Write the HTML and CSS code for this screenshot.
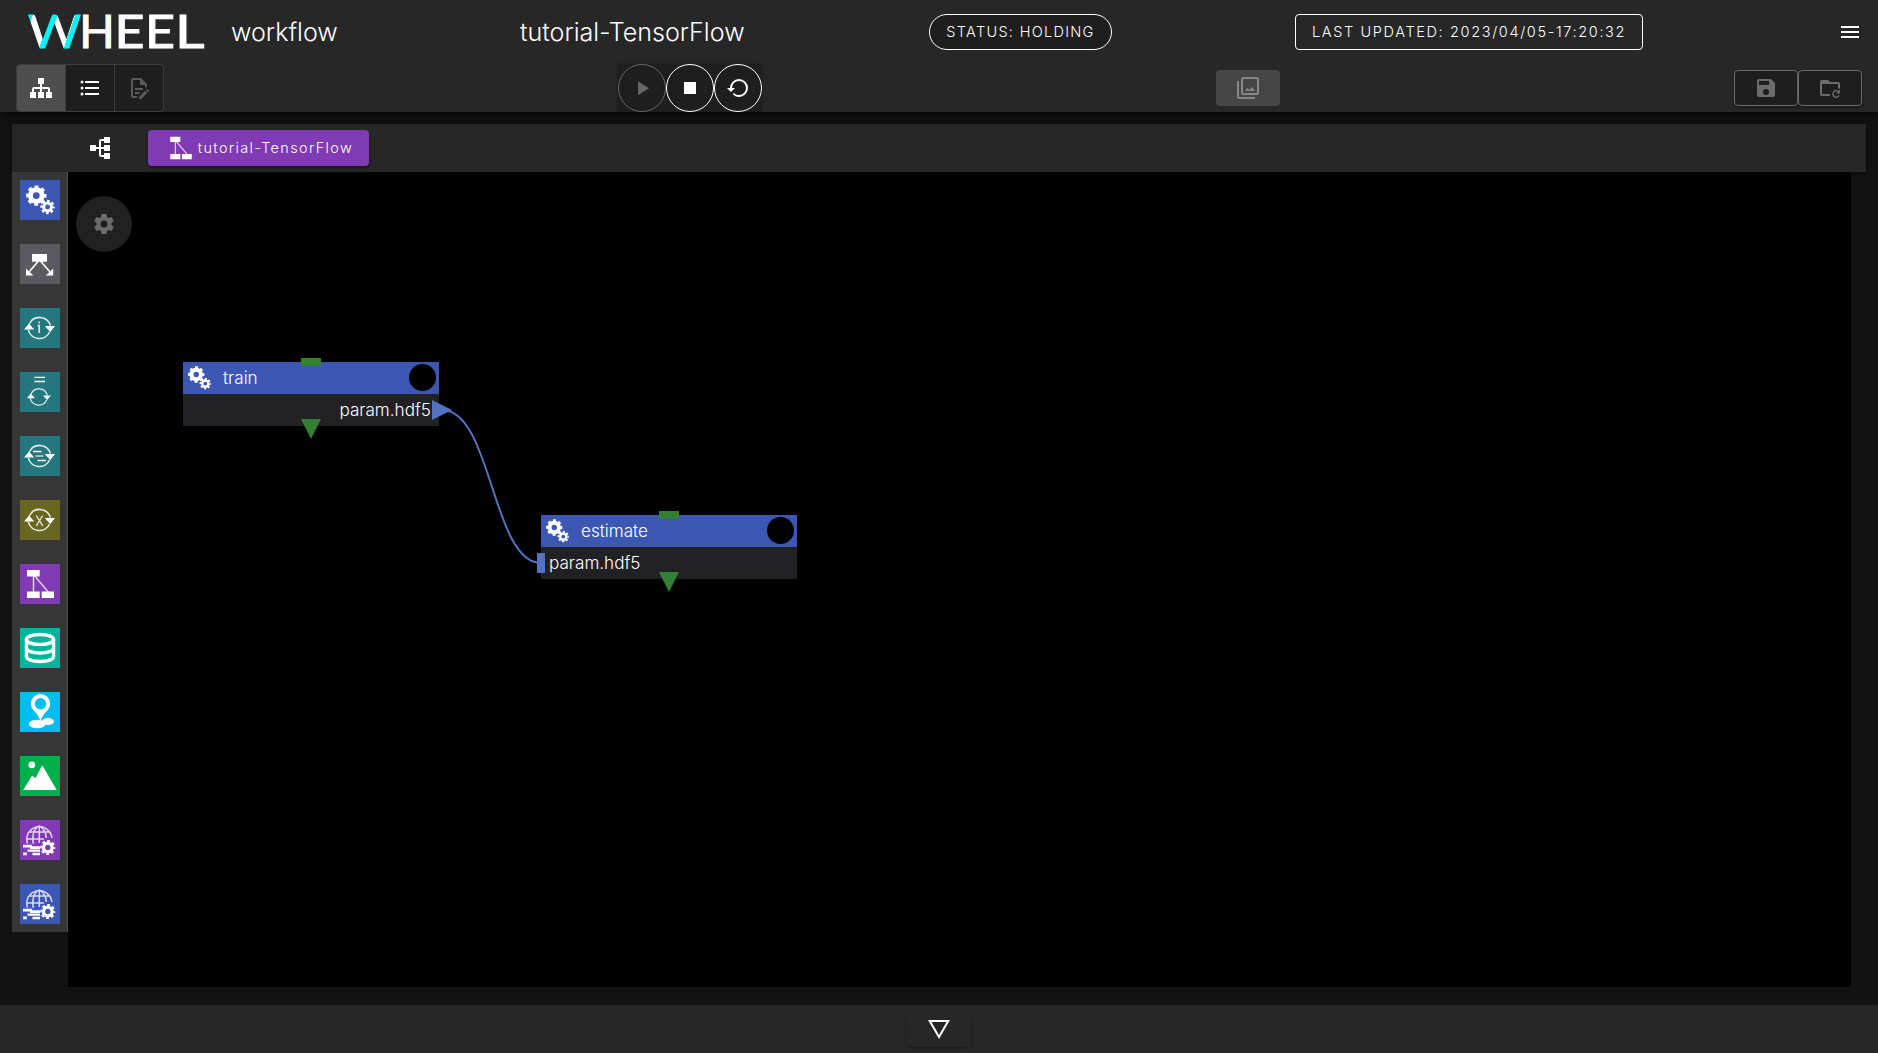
FILE: index.html
```html
<!DOCTYPE html>
<html lang="en">
<head>
<meta charset="utf-8">
<title>WHEEL workflow</title>
<link rel="stylesheet" href="styles.css">
</head>
<body>
<svg class="defs" aria-hidden="true">
  <symbol id="gears" viewBox="0 0 40 40">
    <g fill="none" stroke="#fff">
      <circle cx="16.3" cy="15.6" r="5.9" stroke-width="5"/>
      <circle cx="16.3" cy="15.6" r="8.7" stroke-width="3" stroke-dasharray="3.8 3.033" stroke-dashoffset="1.9"/>
      <circle cx="27.6" cy="27" r="3.9" stroke-width="3"/>
      <circle cx="27.6" cy="27" r="6" stroke-width="2.4" stroke-dasharray="2.6 2.112" stroke-dashoffset="1.3"/>
    </g>
  </symbol>
  <symbol id="cycle" viewBox="0 0 40 40">
    <path d="M9.3 16A11.3 11.3 0 0 1 30.4 17.5M29.6 24A11.3 11.3 0 0 1 8.3 21.6" fill="none" stroke="#fff" stroke-opacity=".85" stroke-width="1.6"/>
    <path d="M4 21.6L9 15.4L14.2 21.6ZM24.8 18L35 18L30.2 24Z" fill="#fff"/>
  </symbol>
  <symbol id="workflow" viewBox="0 0 40 40">
    <path d="M13.5 9V30M14 11L29 29" stroke="#fff" stroke-opacity=".75" stroke-width="1.5"/>
    <path d="M7 6H19.7V12.5H7ZM7 27.5H19.7V34H7ZM21.7 27.5H34V34H21.7Z" fill="#fff"/>
  </symbol>
  <symbol id="globe" viewBox="0 0 40 40">
    <g fill="none" stroke="#fff" stroke-opacity=".78" stroke-width="1.5">
      <path d="M7.5 23.5A12.6 12.6 0 1 1 31.900 18M19.3 6V23M13.600 24C12 20 12.300 8.500 19.300 6C24.500 8.500 26 13 26.200 18M8.500 12H30M6.800 19H24"/>
    </g>
    <path d="M3 24.700H12V26.300H20V29H10V27.600H3ZM7.500 29.400H20V31.700H7.500ZM3.200 32.500H6.800V35.300H3.200ZM12.500 32.700H20V35.300H12.500Z" fill="#fff"/>
    <g fill="none" stroke="#fff">
      <circle cx="27.800" cy="27.500" r="4.300" stroke-width="3.200"/>
      <circle cx="27.800" cy="27.500" r="6.500" stroke-width="2.200" stroke-dasharray="2.700 2.405" stroke-dashoffset="1.350"/>
    </g>
  </symbol>
</svg>

<header class="app-bar">
  <div class="title-row">
    <svg class="logo" viewBox="0 0 180 44" role="img" aria-label="WHEEL">
      <defs>
        <linearGradient id="stripes" gradientUnits="userSpaceOnUse" x1="11" y1="38" x2="33.300" y2="45.600" spreadMethod="repeat">
          <stop offset="0" stop-color="#00f6ff"/><stop offset=".3" stop-color="#00f6ff"/>
          <stop offset=".3" stop-color="#fff"/><stop offset="1" stop-color="#fff"/>
        </linearGradient>
      </defs>
      <g class="logo-text">
        <text x="0" y="37.500" fill="url(#stripes)" stroke="url(#stripes)" textLength="53" lengthAdjust="spacingAndGlyphs">W</text>
        <g fill="#fff" stroke="#fff">
          <text x="51.300" y="37.500">H</text>
          <text x="86.500" y="37.500" textLength="30" lengthAdjust="spacingAndGlyphs">E</text>
          <text x="117" y="37.500" textLength="30" lengthAdjust="spacingAndGlyphs">E</text>
          <text x="147" y="37.500" textLength="29.500" lengthAdjust="spacingAndGlyphs">L</text>
        </g>
      </g>
    </svg>
    <span class="heading mode-name">workflow</span>
    <span class="heading project-name">tutorial-TensorFlow</span>
    <span class="status">STATUS: HOLDING</span>
    <span class="updated">LAST UPDATED: 2023/04/05-17:20:32</span>
    <svg class="icon menu" viewBox="0 0 24 24"><path d="M3 6H21V8H3ZM3 11H21V13H3ZM3 16H21V18H3Z"/></svg>
  </div>
  <div class="tool-row">
    <div class="view-toggle">
      <button class="active"><svg class="icon" viewBox="0 0 24 24"><path d="M9,2V8H11V11H5C3.89,11 3,11.89 3,13V16H1V22H7V16H5V13H11V16H9V22H15V16H13V13H19V16H17V22H23V16H21V13C21,11.89 20.11,11 19,11H13V8H15V2H9Z"/></svg></button>
      <button><svg class="icon" viewBox="0 0 24 24"><path d="M7,5H21V7H7V5M7,13V11H21V13H7M4,4.5A1.5,1.5 0 0,1 5.5,6A1.5,1.5 0 0,1 4,7.5A1.5,1.5 0 0,1 2.5,6A1.5,1.5 0 0,1 4,4.5M4,10.5A1.5,1.5 0 0,1 5.5,12A1.5,1.5 0 0,1 4,13.5A1.5,1.5 0 0,1 2.5,12A1.5,1.5 0 0,1 4,10.5M7,19V17H21V19H7M4,16.5A1.5,1.5 0 0,1 5.5,18A1.5,1.5 0 0,1 4,19.5A1.5,1.5 0 0,1 2.5,18A1.5,1.5 0 0,1 4,16.5Z"/></svg></button>
      <button class="off"><svg class="icon" viewBox="0 0 24 24"><path d="M8,12H16V14H8V12M10,20H6V4H13V9H18V12.1L20,10.1V8L14,2H6A2,2 0 0,0 4,4V20A2,2 0 0,0 6,22H10V20M8,18H12.1L13,17.1V16H8V18M20.2,13C20.3,13 20.5,13.1 20.6,13.2L21.9,14.5C22.1,14.7 22.1,15.1 21.9,15.3L20.9,16.3L18.8,14.2L19.8,13.2C19.9,13.1 20,13 20.2,13M20.2,16.9L14.1,23H12V20.9L18.1,14.8L20.2,16.9Z"/></svg></button>
    </div>
    <div class="run-controls">
      <button class="off"><svg class="icon" viewBox="0 0 24 24"><path d="M8,5.140V19.140L19,12.140L8,5.140Z"/></svg></button>
      <button><svg class="icon" viewBox="0 0 24 24"><path d="M18,18H6V6H18V18Z"/></svg></button>
      <button><svg class="icon" viewBox="0 0 24 24"><path d="M13,3A9,9 0 0,0 4,12H1L4.89,15.89L4.96,16.03L9,12H6A7,7 0 0,1 13,5A7,7 0 0,1 20,12A7,7 0 0,1 13,19C11.07,19 9.32,18.21 8.06,16.94L6.64,18.36C8.27,20 10.5,21 13,21A9,9 0 0,0 22,12A9,9 0 0,0 13,3Z"/></svg></button>
    </div>
    <button class="gallery"><svg class="icon" viewBox="0 0 24 24"><path fill-rule="evenodd" d="M21,17H7V3H21ZM21,1H7A2,2 0 0,0 5,3V17A2,2 0 0,0 7,19H21A2,2 0 0,0 23,17V3A2,2 0 0,0 21,1ZM3,5H1V21A2,2 0 0,0 3,23H19V21H3ZM8.800 15L11.500 12L13.500 13.800L16 11L19 15Z"/></svg></button>
    <div class="save-group">
      <button><svg class="icon" viewBox="0 0 24 24"><path d="M15,9H5V5H15M12,19A3,3 0 0,1 9,16A3,3 0 0,1 12,13A3,3 0 0,1 15,16A3,3 0 0,1 12,19M17,3H5C3.89,3 3,3.9 3,5V19A2,2 0 0,0 5,21H19A2,2 0 0,0 21,19V7L17,3Z"/></svg></button>
      <button><svg class="icon" viewBox="0 0 24 24"><path d="M4 18H12V20H4A2 2 0 0 1 2 18V6A2 2 0 0 1 4 4H10L12 6H20A2 2 0 0 1 22 8V12.500H20V8H4Z"/><path d="M21 16A3.300 3.300 0 1 0 21.200 19.500" fill="none" stroke="currentColor" stroke-width="1.500"/><path d="M22 13.500V17.500H18Z"/></svg></button>
    </div>
  </div>
</header>

<main class="workspace">
  <nav class="breadcrumb-bar">
    <svg class="icon tree" viewBox="0 0 24 24"><path transform="rotate(-90 12 12)" d="M9,2V8H11V11H5C3.89,11 3,11.89 3,13V16H1V22H7V16H5V13H11V16H9V22H15V16H13V13H19V16H17V22H23V16H21V13C21,11.89 20.11,11 19,11H13V8H15V2H9Z"/></svg>
    <button class="crumb"><svg class="crumb-icon" viewBox="6 5 29 30"><use href="#workflow" width="40" height="40"/></svg><span>tutorial-TensorFlow</span></button>
  </nav>
  <div class="editor">
    <aside class="palette">
      <svg class="tile task"><use href="#gears"/></svg>
      <svg class="tile branch" viewBox="0 0 40 40"><path d="M18.500 17L9 28M20.500 17L30 28" stroke="#fff" stroke-width="1.600"/><path d="M12 10H27V17.700H12ZM6 24.500L13.400 31.500H6ZM33.200 24.500V31.500H25.800Z" fill="#fff"/></svg>
      <svg class="tile loop" viewBox="0 0 40 40"><use href="#cycle"/><path d="M17.500 17.500H19.200V25M19.200 13.500V15.500" fill="none" stroke="#fff" stroke-opacity=".8" stroke-width="1.700"/></svg>
      <svg class="tile loop" viewBox="0 0 40 40"><use href="#cycle" x="3.800" y="9.500" width="31" height="31"/><path d="M14.500 5.300H25M14.500 9.500H25" stroke="#fff" stroke-width="1.300"/></svg>
      <svg class="tile loop" viewBox="0 0 40 40"><use href="#cycle"/><path d="M13 15.500H21.500M17.500 24.500H26" stroke="#fff" stroke-width="1.400"/><path d="M15.500 20H23.500" stroke="#fff" stroke-opacity=".6" stroke-width="1.800"/></svg>
      <svg class="tile sweep" viewBox="0 0 40 40"><use href="#cycle"/><path d="M16.300 15.500L22.700 25.800M22.700 15.500L16.300 25.800" stroke="#fff" stroke-opacity=".8" stroke-width="1.400"/></svg>
      <svg class="tile flow"><use href="#workflow"/></svg>
      <svg class="tile storage" viewBox="0 0 40 40"><g fill="none" stroke="#fff" stroke-width="3.400"><ellipse cx="20" cy="11.500" rx="13.500" ry="5"/><path d="M6.500 11.500V28.500C6.500 31.500 12.500 33.500 20 33.500S33.500 31.500 33.500 28.500V11.500M6.500 20C6.500 23 12.500 25 20 25S33.500 23 33.500 20"/></g></svg>
      <svg class="tile source" viewBox="0 0 40 40"><g fill="#fff"><path fill-rule="evenodd" d="M20.500 2A9.600 9.600 0 0 1 30.100 11.700C30.100 18 24.500 20 22.500 24.500L20.500 29L18.500 24.500C16.500 20 10.900 18 10.900 11.700A9.600 9.600 0 0 1 20.500 2ZM20.500 6A5.700 5.700 0 1 0 20.500 17.400A5.700 5.700 0 1 0 20.500 6Z"/><ellipse cx="17.300" cy="32" rx="8.500" ry="4.200"/><ellipse cx="28" cy="29.500" rx="6" ry="3.500"/></g></svg>
      <svg class="tile viewer" viewBox="0 0 40 40"><circle cx="11.800" cy="8.800" r="3.400" fill="#fff"/><path d="M3.200 34L12 19.800L15.500 22L22.300 9.200L36.700 34Z" fill="#fff"/></svg>
      <svg class="tile flow"><use href="#globe"/></svg>
      <svg class="tile task"><use href="#globe"/></svg>
    </aside>
    <section class="canvas">
      <button class="fab"><svg class="icon" viewBox="0 0 24 24"><path d="M12,15.5A3.5,3.5 0 0,1 8.5,12A3.5,3.5 0 0,1 12,8.5A3.5,3.5 0 0,1 15.5,12A3.5,3.5 0 0,1 12,15.5M19.43,12.97C19.47,12.65 19.5,12.33 19.5,12C19.5,11.67 19.47,11.34 19.43,11L21.54,9.37C21.73,9.22 21.78,8.95 21.66,8.73L19.66,5.27C19.54,5.05 19.27,4.96 19.05,5.05L16.56,6.05C16.04,5.66 15.5,5.32 14.87,5.07L14.5,2.42C14.46,2.18 14.25,2 14,2H10C9.75,2 9.54,2.18 9.5,2.42L9.13,5.07C8.5,5.32 7.96,5.66 7.44,6.05L4.95,5.05C4.73,4.96 4.46,5.05 4.34,5.27L2.34,8.73C2.21,8.95 2.27,9.22 2.46,9.37L4.57,11C4.53,11.34 4.5,11.67 4.5,12C4.5,12.33 4.53,12.65 4.57,12.97L2.46,14.63C2.27,14.78 2.21,15.05 2.34,15.27L4.34,18.73C4.46,18.95 4.73,19.03 4.95,18.95L7.44,17.94C7.96,18.34 8.5,18.68 9.13,18.93L9.5,21.58C9.54,21.82 9.75,22 10,22H14C14.25,22 14.46,21.82 14.5,21.58L14.87,18.93C15.5,18.67 16.04,18.34 16.56,17.94L19.05,18.95C19.27,19.03 19.54,18.95 19.66,18.73L21.66,15.27C21.78,15.05 21.73,14.78 21.54,14.63L19.43,12.97Z"/></svg></button>
      <div class="node train">
        <div class="node-head"><svg class="node-icon" viewBox="6 5 30 30"><use href="#gears" width="40" height="40"/></svg><span>train</span><i class="state"></i></div>
        <div class="node-body output">param.hdf5</div>
        <i class="port-in"></i><i class="port-out"></i>
      </div>
      <div class="node estimate">
        <div class="node-head"><svg class="node-icon" viewBox="6 5 30 30"><use href="#gears" width="40" height="40"/></svg><span>estimate</span><i class="state"></i></div>
        <div class="node-body">param.hdf5</div>
        <i class="port-in"></i><i class="port-out"></i>
      </div>
      <svg class="links" viewBox="0 0 1783 815">
        <path d="M374 238C424 238 424 391 473 391" fill="none" stroke="#5372c2" stroke-width="2"/>
        <path d="M364 228L384 238L364 248ZM469 381H477V401H469Z" fill="#5372c2"/>
      </svg>
    </section>
  </div>
</main>

<footer class="drawer-bar">
  <button class="expand"><svg class="icon" viewBox="0 0 24 24"><path d="M1,3H23L12,22ZM4.500 5L12 18L19.500 5Z" fill-rule="evenodd"/></svg></button>
</footer>
</body>
</html>
```
FILE: styles.css
```css
* { box-sizing: border-box; }
body {
  margin: 0;
  height: 1053px;
  display: flex;
  flex-direction: column;
  background: #121212;
  color: #fff;
  font-family: Inter, "Noto Sans CJK JP", sans-serif;
  font-weight: 300;
  overflow: hidden;
}
button {
  margin: 0;
  padding: 0;
  border: 0;
  background: #1e1e1e;
  color: #fff;
  font: inherit;
  display: flex;
  align-items: center;
  justify-content: center;
}
.defs { position: absolute; width: 0; height: 0; }
.icon { width: 24px; height: 24px; fill: currentColor; display: block; flex: none; }

/* Header */
.app-bar {
  height: 112px;
  flex: none;
  background: #272727;
  box-shadow: 0 2px 8px rgba(0, 0, 0, .7);
  position: relative;
  z-index: 2;
}
.title-row {
  height: 64px;
  display: grid;
  grid-template-columns: 203px 289px 409px 183px 183px 348px auto;
  align-items: center;
  padding-left: 28px;
  padding-right: 16px;
}
.logo { width: 180px; height: 44px; overflow: visible; }
.logo-text { font-family: Lato, sans-serif; font-size: 46.5px; font-weight: 400; stroke-width: 1px; }
.heading { font-size: 25.1px; white-space: nowrap; }
.status, .updated {
  height: 36px;
  border: 1px solid #fff;
  display: flex;
  align-items: center;
  justify-content: center;
  padding-bottom: 2px;
  font-size: 14.5px;
  letter-spacing: 1.3px;
  white-space: nowrap;
}
.status { border-radius: 18px; background: #1e1e1e; grid-column: 4; }
.updated { border-radius: 4px; grid-column: 6; letter-spacing: 1.64px; }
.menu { justify-self: end; }
.tool-row {
  height: 48px;
  display: grid;
  grid-template-columns: 602px 598px 518px auto;
  align-items: center;
  padding-left: 16px;
}
.view-toggle { display: flex; width: 148px; height: 48px; border: 1px solid #3c3c3c; border-radius: 4px; overflow: hidden; }
.view-toggle button { flex: 1; border-left: 1px solid #3c3c3c; }
.view-toggle .active { background: #4e4e4e; border-left: 0; }
.view-toggle .off { color: #5a5a5a; }
.run-controls { display: flex; width: 144px; background: #1e1e1e; border-radius: 4px; box-shadow: 0 1px 4px rgba(0, 0, 0, .4); }
.run-controls button { width: 48px; height: 48px; border: 1px solid #fff; border-radius: 50%; background: none; }
.run-controls .off { color: #666; border-color: #666; }
.gallery { width: 64px; height: 36px; border-radius: 4px; background: #464646; color: #868686; }
.save-group { display: flex; }
.save-group button {
  width: 64px;
  height: 36px;
  border: 1px solid #6b6b6b;
  border-radius: 4px;
  color: #6b6b6b;
  box-shadow: 0 2px 3px rgba(0, 0, 0, .3);
}

/* Workspace */
.workspace { height: 893px; flex: none; padding: 12px 12px 0; }
.breadcrumb-bar {
  height: 48px;
  display: flex;
  align-items: center;
  padding-left: 76px;
  background: #272727;
  box-shadow: 0 2px 5px rgba(0, 0, 0, .5);
}
.crumb {
  width: 221px;
  height: 36px;
  margin-left: 36px;
  padding: 0 0 1px 5px;
  gap: 5px;
  border-radius: 4px;
  background: #803ab3;
  font-size: 14.5px;
  letter-spacing: 1.35px;
  box-shadow: 0 2px 3px rgba(0, 0, 0, .4);
}
.crumb-icon { width: 24px; height: 24px; }
.editor { display: flex; align-items: flex-start; position: relative; }
.palette {
  width: 56px;
  height: 760px;
  padding: 8px;
  display: flex;
  flex-direction: column;
  gap: 24px;
  background: #363636;
  border-right: 1px solid #505050;
}
.tile { width: 40px; height: 40px; flex: none; }
.task { background: #3c56b4; }
.branch { background: #5b5a60; }
.loop { background: #25777f; }
.sweep { background: #676722; }
.flow { background: #803ab3; }
.storage { background: #00b59c; }
.source { background: #00bdf2; }
.viewer { background: #00ae4c; }
.canvas { position: relative; width: 1783px; height: 815px; background: #000; }
.fab { position: absolute; left: 8px; top: 24px; width: 56px; height: 56px; border-radius: 50%; background: #212121; color: #6c6c6c; }
.links { position: absolute; inset: 0; width: 100%; height: 100%; pointer-events: none; }

/* Graph nodes, placed freely on the canvas */
.node { position: absolute; width: 256px; height: 64px; font-size: 17.1px; }
.train { left: 115px; top: 190px; }
.estimate { left: 473px; top: 343px; }
.node-head { height: 32px; display: flex; align-items: center; padding: 0 3px 1px 5px; background: #3c56b4; }
.node-icon { width: 24px; height: 24px; margin-right: 11px; }
.state { width: 27px; height: 27px; border-radius: 50%; background: #000; margin-left: auto; }
.node-body { height: 32px; line-height: 31px; padding: 0 8px; background: #212123; }
.output { text-align: right; }
.port-in { position: absolute; left: 118px; top: -4px; width: 20px; height: 8px; background: #338033; }
.port-out { position: absolute; left: 118px; top: 57px; width: 20px; height: 20px; background: #338033; clip-path: polygon(0 0, 100% 0, 50% 100%); }

/* Bottom drawer */
.drawer-bar { height: 48px; flex: none; display: flex; justify-content: center; align-items: center; background: #272727; }
.expand { width: 64px; height: 36px; border-radius: 4px; background: #272727; box-shadow: 0 1px 3px rgba(0, 0, 0, .3); }
```
